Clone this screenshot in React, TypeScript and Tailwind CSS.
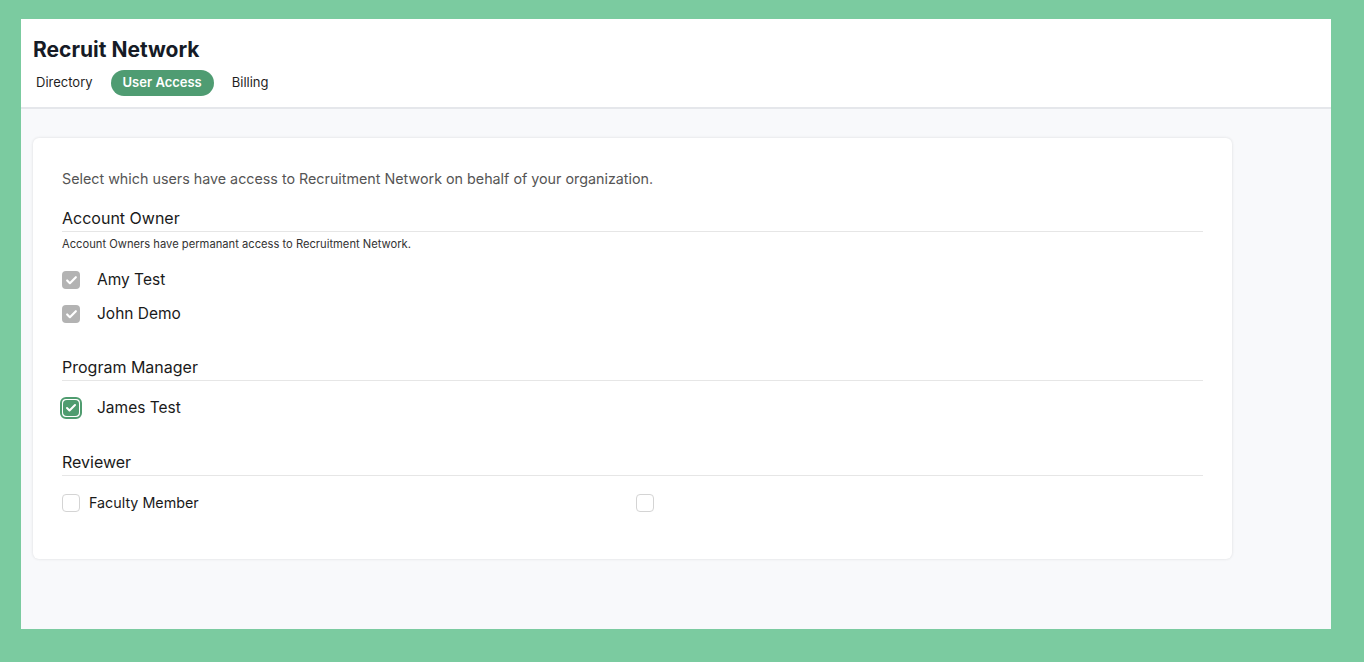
import { Check } from 'lucide-react';

type Person = { name: string; checked: boolean; locked?: boolean };

function Box({ checked, locked }: { checked: boolean; locked?: boolean }) {
  if (locked) {
    return (
      <span className="flex h-[18px] w-[18px] items-center justify-center rounded-[4px] bg-[#b3b3b3]">
        <Check className="h-[13px] w-[13px] text-white" strokeWidth={4} />
      </span>
    );
  }
  if (checked) {
    return (
      <span className="-my-[2px] -ml-[2px] flex h-[22px] w-[22px] items-center justify-center rounded-[6px] border-2 border-[#4f9c6f] bg-white">
        <span className="flex h-[16px] w-[16px] items-center justify-center rounded-[4px] bg-[#4f9c6f]">
          <Check className="h-[12px] w-[12px] text-white" strokeWidth={4} />
        </span>
      </span>
    );
  }
  return <span className="block h-[18px] w-[18px] rounded-[4px] border border-[#d4d4d4] bg-white" />;
}

function Section({ title, children }: { title: string; children: React.ReactNode }) {
  return (
    <div>
      <div className="border-b border-[#e6e6e6] pb-[2px] text-[16px] leading-[22px] text-[#1a1a1a]">{title}</div>
      {children}
    </div>
  );
}

const owners: Person[] = [
  { name: 'Amy Test', checked: true, locked: true },
  { name: 'John Demo', checked: true, locked: true },
];

export default function App() {
  return (
    <div className="min-h-screen bg-[#7bcba0] pt-[19px] pl-[21px]" style={{ fontFamily: 'Inter, "Noto Sans", sans-serif' }}>
      <div className="flex h-[610px] w-[1310px] flex-col bg-[#f8f9fb]">
        {/* Header */}
        <div className="h-[90px] border-b-2 border-[#e5e7eb] bg-white pl-[12px] pt-[18px]">
          <h1 className="text-[21px] font-bold leading-[26px] text-[#161b26]">Recruit Network</h1>
          <div className="mt-[7px] flex items-center text-[13px]">
            <span className="px-[3px] text-[#1f1f1f]">Directory</span>
            <span className="ml-[15px] rounded-full bg-[#4f9c72] px-[12px] py-[3px] font-semibold text-white">User Access</span>
            <span className="ml-[18px] text-[#1f1f1f]">Billing</span>
          </div>
        </div>

        {/* Content */}
        <div className="pl-[12px] pt-[29px]">
          <div className="h-[421px] w-[1199px] rounded-[6px] bg-white px-[29px] pt-[31px] shadow-[0_0_3px_rgba(0,0,0,0.12)]">
            <p className="text-[14.3px] leading-[20px] text-[#555]">
              Select which users have access to Recruitment Network on behalf of your organization.
            </p>

            <div className="mt-[18px]">
              <Section title="Account Owner">
                <p className="mt-[5px] text-[11.2px] leading-[15px] text-[#333]">
                  Account Owners have permanant access to Recruitment Network.
                </p>
                <div className="mt-[19px] flex flex-col gap-[16px]">
                  {owners.map((p) => (
                    <div key={p.name} className="flex items-center">
                      <Box checked={p.checked} locked={p.locked} />
                      <span className="ml-[17px] text-[15.5px] leading-[18px] text-[#1a1a1a]">{p.name}</span>
                    </div>
                  ))}
                </div>
              </Section>
            </div>

            <div className="mt-[33px]">
              <Section title="Program Manager">
                <div className="mt-[18px] flex items-center">
                  <Box checked />
                  <span className="ml-[15px] text-[15.5px] leading-[18px] text-[#1a1a1a]">James Test</span>
                </div>
              </Section>
            </div>

            <div className="mt-[34px]">
              <Section title="Reviewer">
                <div className="mt-[18px] flex items-center">
                  <div className="flex w-[574px] items-center">
                    <Box checked={false} />
                    <span className="ml-[9px] text-[14.3px] leading-[18px] text-[#1a1a1a]">Faculty Member</span>
                  </div>
                  <Box checked={false} />
                </div>
              </Section>
            </div>
          </div>
        </div>
      </div>
    </div>
  );
}
